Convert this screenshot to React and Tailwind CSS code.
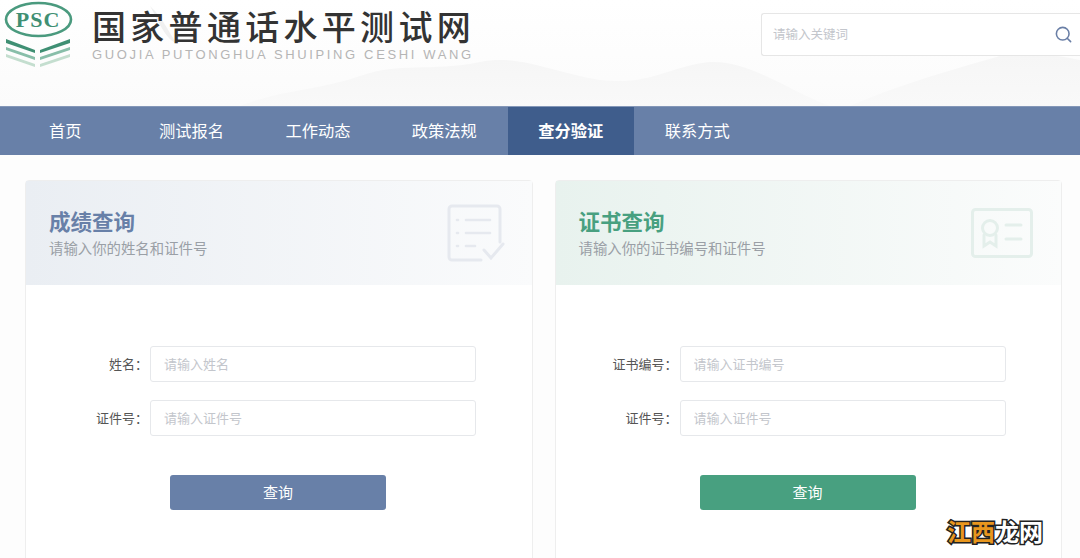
import React from 'react';
import { Search } from 'lucide-react';

const navItems = ['首页', '测试报名', '工作动态', '政策法规', '查分验证', '联系方式'];

const Logo = () => (
    <svg width="74" height="70" viewBox="0 0 74 70" className="shrink-0">
        <ellipse cx="38.5" cy="19.5" rx="32.5" ry="16.5" fill="none" stroke="#4a9a7e" strokeWidth="2.6" />
        <text x="38" y="27" textAnchor="middle" fontFamily="'Liberation Serif', serif" fontWeight="700" fontSize="22" letterSpacing="1" fill="#3f8f73">PSC</text>
        <path d="M6 39 L35 50 L35 53 L6 43 Z M70 39 L40 50 L40 53 L70 43 Z" fill="#3f8f73" />
        <path d="M6 47 L35 57 L35 60 L6 50 Z M70 47 L40 57 L40 60 L70 50 Z" fill="#88bea9" />
        <path d="M6 54 L35 64 L35 67 L6 57 Z M70 54 L40 64 L40 67 L70 57 Z" fill="#c4decf" />
    </svg>
);

const Mountains = () => (
    <svg className="absolute inset-0 w-full h-full" viewBox="0 0 1080 106" preserveAspectRatio="none">
        <defs>
            <linearGradient id="hill" x1="0" y1="0" x2="0" y2="1">
                <stop offset="0" stopColor="#f6f6f6" />
                <stop offset="1" stopColor="#f9f9f9" />
            </linearGradient>
        </defs>
        <path d="M150 6 C165 20 170 36 178 44 C166 40 160 24 150 6 Z" fill="#f0f0f0" />
        <path d="M240 106 C280 90 320 90 360 76 C400 62 430 72 480 62 C520 54 550 72 600 80 C650 86 670 66 710 62 C750 60 790 92 830 106 Z" fill="url(#hill)" />
        <path d="M850 106 C890 88 950 70 1000 56 C1030 50 1060 56 1080 60 L1080 106 Z" fill="url(#hill)" />
    </svg>
);

const ScoreIcon = () => (
    <svg width="58" height="60" viewBox="0 0 58 60" fill="none" strokeLinecap="round" className="text-[#e6e9ef]" stroke="currentColor">
        <path d="M34 56 H5 a3 3 0 0 1 -3 -3 V5 a3 3 0 0 1 3 -3 H50 a3 3 0 0 1 3 3 V38" strokeWidth="3" />
        <path d="M10 16 h1 M10 29 h1 M10 42 h1 M19 16 h24 M19 29 h24 M19 42 h9" strokeWidth="2.6" />
        <path d="M37 46 l7 8 l12 -14" strokeWidth="3" />
    </svg>
);

const CertIcon = () => (
    <svg width="62" height="50" viewBox="0 0 62 50" fill="none" stroke="#e4efeb" strokeLinecap="round">
        <rect x="1.5" y="1.5" width="59" height="47" rx="3" strokeWidth="3" />
        <circle cx="19" cy="20" r="7.5" strokeWidth="3" />
        <path d="M13 27 V38 L19 34 L25 38 V27" strokeWidth="3" />
        <path d="M35 17 h15 M35 31 h15" strokeWidth="3" />
    </svg>
);

const Field = ({ label, placeholder }) => (
    <div className="flex items-center">
        <label className="w-[116px] pr-[2px] text-right text-[13px] text-[#555] whitespace-nowrap">{label}：</label>
        <input
            placeholder={placeholder}
            className="w-[326px] h-[36px] px-[13px] pb-[1px] bg-white border border-[#e6e8eb] rounded-[3px] text-[13px] outline-none placeholder:text-[#c3c6cc]"
        />
    </div>
);

const QueryCard = ({ title, desc, titleColor, headBg, icon, fields, btnColor }) => (
    <div className="w-[507.5px] shrink-0 bg-white border border-[#eeeeee] rounded-t-[4px]">
        <div className={`relative h-[104px] pl-[23px] pt-[26px] ${headBg}`}>
            <h2 className={`text-[21.5px] leading-[28px] font-bold ${titleColor}`}>{title}</h2>
            <p className="text-[14.4px] leading-[26px] text-[#9a9fa6]">{desc}</p>
            {icon}
        </div>
        <div className="h-[320px] pt-[61px] pl-[8px]">
            <div className="flex flex-col gap-[18px]">
                {fields.map((f) => (
                    <Field key={f.label} label={f.label} placeholder={f.placeholder} />
                ))}
            </div>
            <button className={`block ml-[136px] mt-[39px] w-[216px] h-[35px] rounded-[3px] text-white text-[15px] ${btnColor}`}>查询</button>
        </div>
    </div>
);

export default function App() {
    return (
        <div className="relative h-[558px] w-[1080px] overflow-hidden bg-[#fdfdfd] font-['Noto_Sans_CJK_SC','Liberation_Sans',sans-serif]">
            {/* header */}
            <header className="relative h-[106px] bg-gradient-to-b from-white to-[#fbfbfb]">
                <Mountains />
                <div className="relative flex items-start justify-between">
                    <div className="flex">
                        <Logo />
                        <div className="ml-[18px] mt-[7px] w-[400px]">
                            <div className="text-[34px] leading-[38px] tracking-[4.3px] text-[#333] font-medium whitespace-nowrap">国家普通话水平测试网</div>
                            <div className="mt-[2px] text-[13px] leading-[15px] tracking-[2.64px] text-[#b5b5b5] font-['Liberation_Sans',sans-serif] whitespace-nowrap">GUOJIA PUTONGHUA SHUIPING CESHI WANG</div>
                        </div>
                    </div>
                    <div className="mt-[13px] flex items-center w-[319px] h-[43px] pl-[11px] pr-[7px] bg-white border border-[#e6e6e6] border-r-0 rounded-l-[3px]">
                        <input placeholder="请输入关键词" className="flex-1 min-w-0 text-[12.5px] outline-none bg-transparent placeholder:text-[#c3c6cc]" />
                        <Search size={19} strokeWidth={2} className="text-[#6a7fa6]" />
                    </div>
                </div>
            </header>

            {/* nav */}
            <nav className="flex h-[49px] pl-[2px] bg-[#6880a8] border-t border-[#8497b8]">
                {navItems.map((item) => (
                    <a
                        key={item}
                        className={`w-[126.4px] flex items-center justify-center pb-[2px] text-[16.25px] text-white ${item === '查分验证' ? 'bg-[#3f5d8c] font-bold' : ''}`}
                    >
                        {item}
                    </a>
                ))}
            </nav>

            {/* cards */}
            <main className="flex gap-[22px] pl-[25px] pt-[25px]">
                <QueryCard
                    title="成绩查询"
                    desc="请输入你的姓名和证件号"
                    titleColor="text-[#6880a8]"
                    headBg="bg-gradient-to-r from-[#eaeef3] to-[#fafbfc]"
                    icon={<div className="absolute right-[27px] top-[23px]"><ScoreIcon /></div>}
                    fields={[
                        { label: '姓名', placeholder: '请输入姓名' },
                        { label: '证件号', placeholder: '请输入证件号' },
                    ]}
                    btnColor="bg-[#6880a8]"
                />
                <QueryCard
                    title="证书查询"
                    desc="请输入你的证书编号和证件号"
                    titleColor="text-[#48a080]"
                    headBg="bg-gradient-to-r from-[#e8f2ee] to-[#fbfcfc]"
                    icon={<div className="absolute right-[28px] top-[27px]"><CertIcon /></div>}
                    fields={[
                        { label: '证书编号', placeholder: '请输入证书编号' },
                        { label: '证件号', placeholder: '请输入证件号' },
                    ]}
                    btnColor="bg-[#48a080]"
                />
            </main>

            {/* watermark */}
            <div className="absolute left-[947px] top-[513px] text-[24px] leading-[36px] font-bold whitespace-nowrap [-webkit-text-stroke:3px_#222] [paint-order:stroke_fill]">
                <span className="text-[#e8961e]">江西</span>
                <span className="text-white">龙网</span>
            </div>
        </div>
    );
}
